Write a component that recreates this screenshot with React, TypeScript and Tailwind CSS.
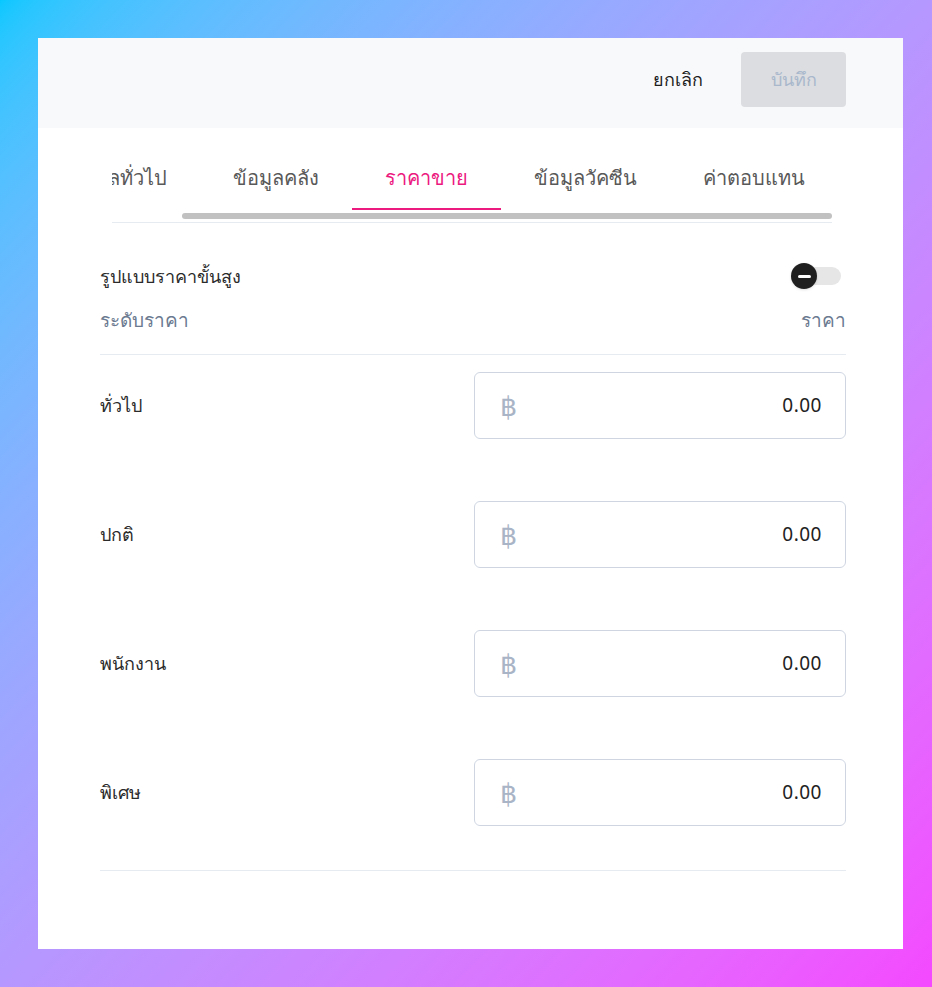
import React from 'react';

const tabs = ['ข้อมูลทั่วไป', 'ข้อมูลคลัง', 'ราคาขาย', 'ข้อมูลวัคซีน', 'ค่าตอบแทน'];
const levels = ['ทั่วไป', 'ปกติ', 'พนักงาน', 'พิเศษ'];

const PriceInput: React.FC = () => (
  <div className="w-[372px] h-[67px] border border-[#cfd6e2] rounded-md bg-white flex items-center justify-between pl-[25px] pr-[23px]">
    <span className="text-[27px] text-[#a9b4c6] leading-none">฿</span>
    <span className="text-[19px] text-[#222] tracking-[0.5px]">0.00</span>
  </div>
);

export default function App() {
  return (
    <div
      className="w-[932px] h-[987px] bg-linear-to-br from-[#06c8ff] to-[#f448ff] pt-[38px] pl-[38px]"
      style={{ fontFamily: '"Noto Sans", "Liberation Sans", sans-serif' }}
    >
      <div className="w-[865px] h-[911px] bg-white flex flex-col">
        {/* header */}
        <div className="h-[90px] bg-[#f8f9fb] flex items-center justify-end gap-[38px] pr-[57px] pb-[8px]">
          <button className="text-[18px] text-[#1f1f1f]">ยกเลิก</button>
          <button className="w-[105px] h-[55px] rounded-[4px] bg-[#dcdde0] text-[18px] text-[#a9b8cc]">บันทึก</button>
        </div>

        <div className="pl-[62px] pr-[57px] flex flex-col">
          {/* tabs */}
          <div className="ml-[12px] mr-[14px] mt-[20px]">
            <div className="overflow-hidden">
              <div className="flex ml-[-76px] w-max">
                {tabs.map((t, i) => (
                  <div
                    key={t}
                    className={
                      'h-[62px] px-[33px] flex items-center text-[20px] font-medium border-b-[2px] ' +
                      (i === 2 ? 'text-[#ec1a7f] border-[#ec1a7f]' : 'text-[#595959] border-transparent')
                    }
                  >
                    {t}
                  </div>
                ))}
              </div>
            </div>
            <div className="h-[12px] flex items-center">
              <div className="ml-[70px] w-[650px] h-[6px] rounded-full bg-[#c1c1c1]" />
            </div>
            <div className="h-px bg-[#e6ebf2]" />
          </div>

          {/* advanced */}
          <div className="mt-[40px] h-[26px] flex items-center justify-between">
            <span className="text-[18px] text-[#2b2b2b]">รูปแบบราคาขั้นสูง</span>
            <div className="relative w-[50px] h-[26px] mr-[5px] flex items-center">
              <div className="ml-[4px] w-[46px] h-[18px] rounded-full bg-[#e6e6e6]" />
              <div className="absolute left-0 top-0 w-[26px] h-[26px] rounded-full bg-[#1f1f1f] flex items-center justify-center shadow">
                <div className="w-[13px] h-[3px] bg-white rounded-sm" />
              </div>
            </div>
          </div>
          <div className="mt-[19px] h-[24px] flex items-center justify-between text-[19px] text-[#6b7a90]">
            <span>ระดับราคา</span>
            <span>ราคา</span>
          </div>
          <div className="mt-[22px] h-px bg-[#e6ebf2]" />

          {/* levels */}
          <div className="mt-[17px] flex flex-col gap-[62px]">
            {levels.map((l) => (
              <div key={l} className="flex items-center justify-between">
                <span className="text-[18px] text-[#2b2b2b]">{l}</span>
                <PriceInput />
              </div>
            ))}
          </div>
          <div className="mt-[44px] h-px bg-[#e6ebf2]" />
        </div>
      </div>
    </div>
  );
}
